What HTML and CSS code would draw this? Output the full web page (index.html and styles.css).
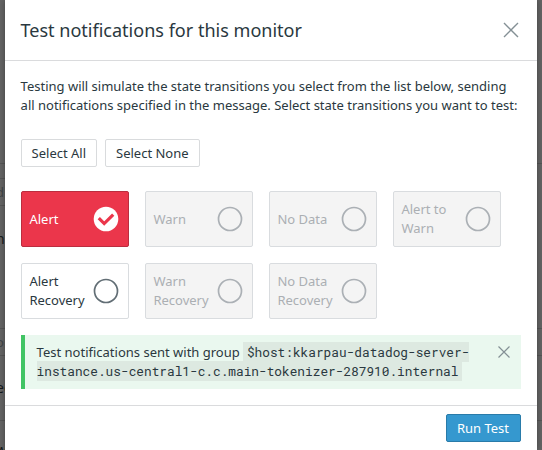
FILE: index.html
```html
<!DOCTYPE html>
<html lang="en">
<head>
<meta charset="utf-8">
<title>Test notifications</title>
<link rel="stylesheet" href="styles.css">
</head>
<body>
<div class="backdrop" aria-hidden="true">
  <i class="rule r1"></i><i class="rule left r2"></i><i class="rule left r3"></i><i class="rule r4"></i><i class="rule r5"></i><i class="rule r6"></i>
  <span class="peek dim p1">d</span><span class="peek p2">ne</span><span class="peek dim p3">o</span><span class="peek p4">ec</span><span class="peek p5">w</span>
</div>
<main class="modal">
  <header class="header">
    <h1>Test notifications for this monitor</h1>
    <svg class="close" width="16" height="16" viewBox="0 0 16 16"><path d="M1 1l14 14M15 1L1 15"/></svg>
  </header>
  <section class="body">
    <p class="intro"><span>Testing will simulate the state transitions you select from the list below, sending</span><br><span>all notifications specified in the message. Select state transitions you want to test:</span></p>
    <div class="actions"><button class="btn all">Select All</button><button class="btn none">Select None</button></div>
    <div class="grid">
      <div class="card selected"><span>Alert</span><svg width="26" height="26" viewBox="0 0 26 26"><circle class="disc" cx="13" cy="13" r="12.3"/><path class="tick" d="M5.8 12.2l5.4 5.4 9-9"/></svg></div>
      <div class="card disabled"><span>Warn</span><svg width="26" height="26" viewBox="0 0 26 26"><circle cx="13" cy="13" r="11.5"/></svg></div>
      <div class="card disabled"><span>No Data</span><svg width="26" height="26" viewBox="0 0 26 26"><circle cx="13" cy="13" r="11.5"/></svg></div>
      <div class="card disabled"><span>Alert to<br>Warn</span><svg width="26" height="26" viewBox="0 0 26 26"><circle cx="13" cy="13" r="11.5"/></svg></div>
      <div class="card"><span>Alert<br>Recovery</span><svg width="26" height="26" viewBox="0 0 26 26"><circle cx="13" cy="13" r="11.5"/></svg></div>
      <div class="card disabled"><span>Warn<br>Recovery</span><svg width="26" height="26" viewBox="0 0 26 26"><circle cx="13" cy="13" r="11.5"/></svg></div>
      <div class="card disabled"><span>No Data<br>Recovery</span><svg width="26" height="26" viewBox="0 0 26 26"><circle cx="13" cy="13" r="11.5"/></svg></div>
    </div>
    <div class="notice">
      <p>Test notifications sent with group <code>$host:kkarpau-datadog-server-<br>instance.us-central1-c.c.main-tokenizer-287910.internal</code></p>
      <svg class="close" width="12" height="12" viewBox="0 0 12 12"><path d="M.5 .5l11 11M11.5 .5L.5 11.5"/></svg>
    </div>
  </section>
  <footer class="footer"><button class="btn primary">Run Test</button></footer>
</main>
</body>
</html>
```

FILE: styles.css
```css
* { box-sizing: border-box; }
body {
  margin: 0;
  height: 450px;
  overflow: hidden;
  position: relative;
  background: #646464;
  color: #2a3840;
  font: 13px/19px "Noto Sans", sans-serif;
}
.backdrop { position: absolute; inset: 0; overflow: hidden; }
.rule { position: absolute; left: 0; right: 0; height: 1px; background: #555; }
.rule.left { right: 50%; }
.r1 { top: 163px; }
.r2 { top: 178px; }
.r3 { top: 205px; }
.r4 { top: 328px; }
.r5 { top: 355px; }
.r6 { top: 420px; }
.peek { position: absolute; left: -4px; color: #15191b; font-size: 14px; }
.peek.dim { color: #414548; font-size: 13px; }
.p1 { top: 183px; }
.p2 { top: 229px; }
.p3 { top: 333px; }
.p4 { top: 378px; }
.p5 { top: 440px; }
.modal {
  position: relative;
  width: 532px;
  height: 450px;
  margin-left: 5px;
  background: #fff;
  box-shadow: 0 0 6px rgba(0, 0, 0, .35);
  display: flex;
  flex-direction: column;
}
.header {
  height: 61px;
  padding: 0 18px 0 15.5px;
  border-bottom: 1px solid #dadbdd;
  display: flex;
  align-items: center;
  justify-content: space-between;
}
h1 { margin: 0; font-size: 18.05px; line-height: 24px; font-weight: 400; }
.close { flex: none; fill: none; stroke: #849095; stroke-width: 1.4; }
.body { flex: 1; padding: 16px; }
.intro { margin: 0 0 24px -.4px; white-space: nowrap; }
.actions { display: flex; gap: 8px; margin-bottom: 24px; }
.btn {
  height: 28px;
  padding: 0 1px 0 0;
  border: 1px solid #d9dbdd;
  border-radius: 2px;
  background: #fff;
  color: inherit;
  font: inherit;
}
.btn.all { width: 76px; padding-right: 0.4px; }
.btn.none { width: 95px; padding-right: 0.4px; }
.btn.primary { width: 75px; background: #3598cf; border-color: #297ba9; color: #fff; }
.grid { display: grid; grid-template-columns: repeat(4, 108px); grid-auto-rows: 56px; gap: 16px; }
.card {
  border: 1px solid #d9dcdf;
  border-radius: 2px;
  padding: 0 9px 0 7.4px;
  display: flex;
  align-items: center;
  justify-content: space-between;
  white-space: nowrap;
}
.card svg { flex: none; fill: none; stroke: #626e75; stroke-width: 1.7; }
.card.disabled { background: #f4f4f4; color: #abafb3; }
.card.disabled svg { stroke: #abb0b5; }
.card.selected { background: #eb364b; border-color: #bb2d3f; color: #fff; }
.card .disc { fill: #fff; stroke: none; }
.card .tick { stroke: #eb364b; stroke-width: 3.2; }
.notice {
  margin-top: 16px;
  height: 54px;
  border-left: 4px solid #41c464;
  background: #eaf8ef;
  padding: 8px 11px 0 11.6px;
  display: flex;
  justify-content: space-between;
}
.notice p { margin: 0; white-space: nowrap; }
.notice .close { margin-top: 3px; stroke-width: 1.2; }
code {
  font: 12.79px/19px "Roboto Mono", "DejaVu Sans Mono", monospace;
  background: #dde9e1;
  padding: 2px 3.8px;
}
.footer {
  height: 45px;
  border-top: 1px solid #dadbdd;
  padding: 8px 16px;
  display: flex;
  justify-content: flex-end;
}
```
